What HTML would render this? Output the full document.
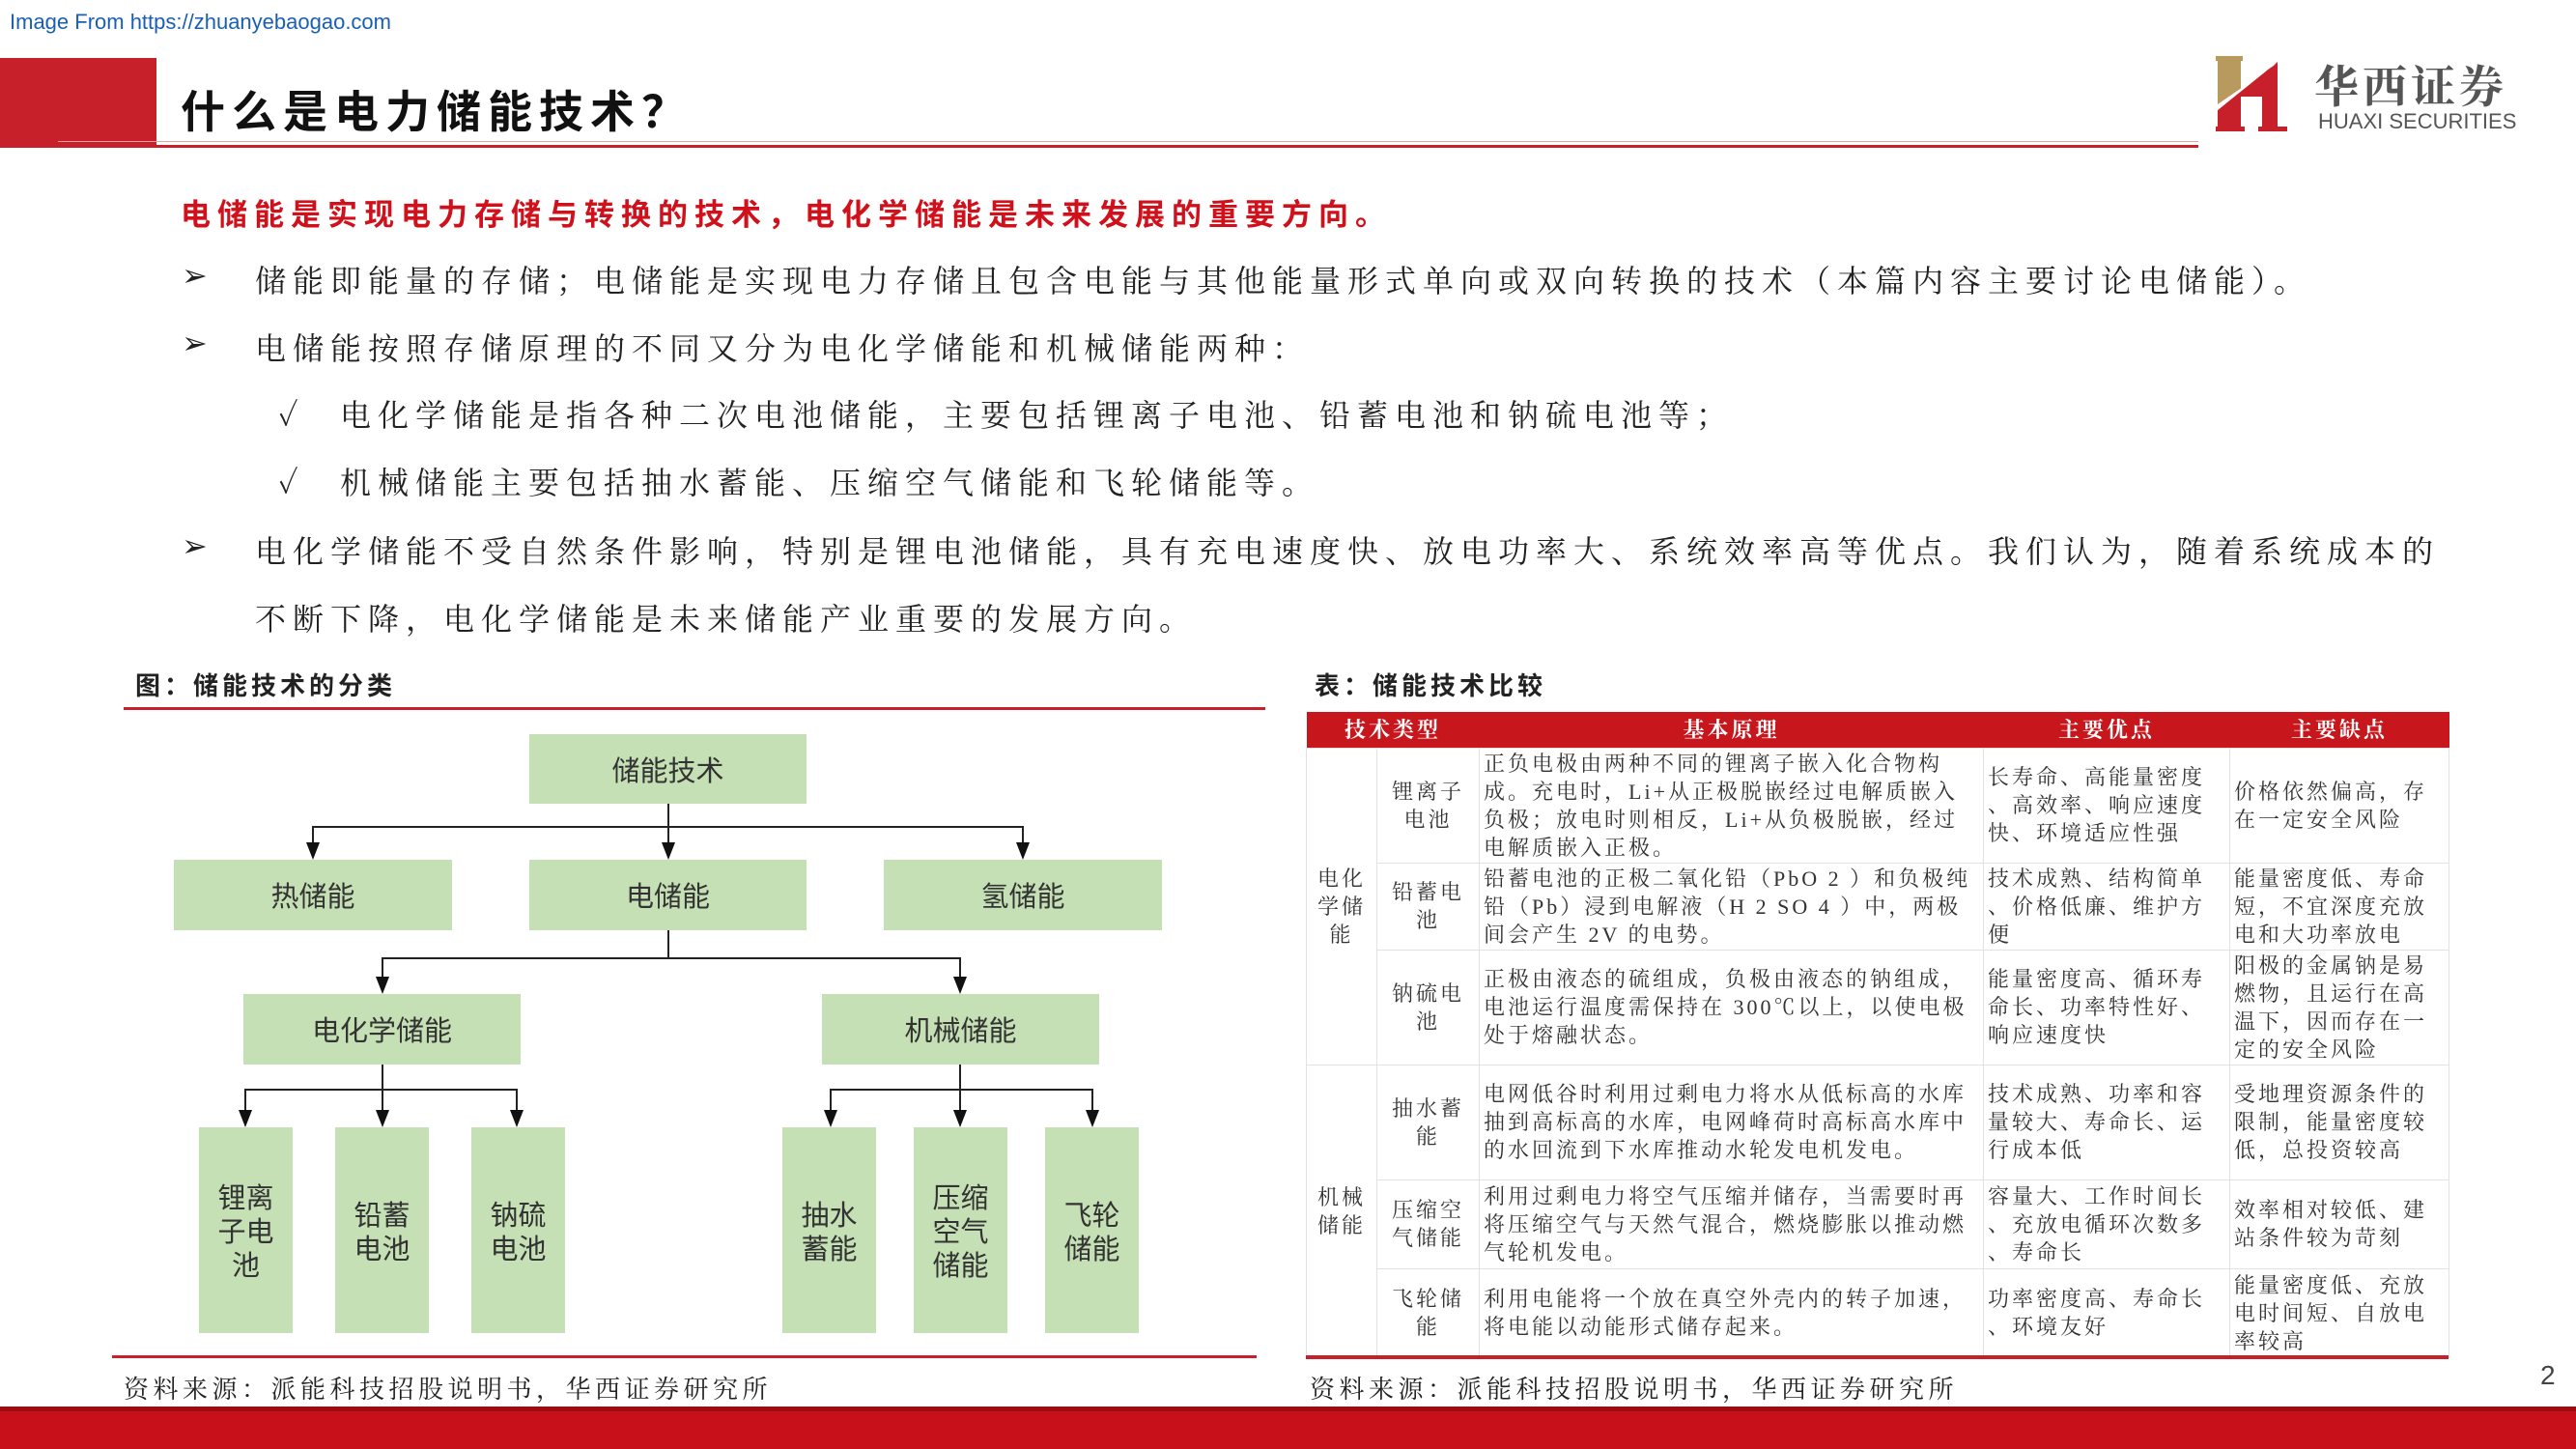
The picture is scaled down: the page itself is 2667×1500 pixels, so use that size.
<!DOCTYPE html>
<html><head><meta charset="utf-8"><style>
*{margin:0;padding:0;box-sizing:border-box}
body{width:2667px;height:1500px;position:relative;background:#fff;overflow:hidden;font-family:"Liberation Sans","Noto Serif CJK SC",serif;color:#222}
.a{position:absolute;white-space:nowrap}
.b{font-family:"Liberation Sans","Noto Sans CJK SC",sans-serif}
.s{font-family:"Liberation Serif","Noto Serif CJK SC",serif}
.box{position:absolute;background:#c5e0b4;display:flex;align-items:center;justify-content:center;text-align:center;font-family:"Noto Sans CJK SC",sans-serif;font-size:29px;color:#333;line-height:35px}
.ln{position:absolute;background:#222}
.ar{position:absolute;width:0;height:0;border-left:7px solid transparent;border-right:7px solid transparent;border-top:18px solid #111}
table{position:absolute;left:1352px;top:737px;width:1183px;border-collapse:collapse;table-layout:fixed;font-family:"Liberation Serif","Noto Serif CJK SC",serif;font-size:22px;letter-spacing:3px;line-height:29px;color:#333}
td{border:1px solid #e2e2e2;padding:0 4px;vertical-align:middle;overflow:hidden}
th{background:#c8161d;color:#fff;font-weight:bold;height:37px;font-size:22px;border:none}
.c{text-align:center}
</style></head><body>
<div class="a" style="left:10px;top:10px;font-size:22px;color:#1a5fb4;font-family:'Liberation Sans',sans-serif">Image From https://zhuanyebaogao.com</div>
<div class="a" style="left:0;top:60px;width:162px;height:93px;background:#c8202a"></div>
<div class="a" style="left:60px;top:150px;width:2216px;height:3px;background:#c8202a"></div>
<div class="a" style="left:60px;top:146px;width:2216px;height:1px;background:#e8a0a0"></div>
<div class="a b" style="left:187px;top:80px;font-size:46px;font-weight:bold;letter-spacing:7px;color:#111">什么是电力储能技术？</div>
<svg class="a" style="left:2294px;top:56px" width="76" height="82" viewBox="0 0 76 82">
<rect x="2" y="4" width="24" height="48" fill="#b89a5e"/><rect x="0" y="2" width="28" height="5" fill="#b89a5e"/>
<polygon points="2,58 64,8 64,78 48,78 48,44 26,44 26,78 2,78" fill="#c8202a"/>
<polygon points="2,52 60,12 64,8 2,58" fill="#fff"/>
<rect x="0" y="75" width="30" height="5" fill="#c8202a"/><rect x="44" y="75" width="30" height="5" fill="#c8202a"/>
</svg>
<div class="a s" style="left:2396px;top:54px;font-size:46px;font-weight:bold;color:#555;letter-spacing:4px">华西证券</div>
<div class="a" style="left:2400px;top:113px;font-size:22px;color:#555;font-family:'Liberation Sans',sans-serif">HUAXI SECURITIES</div>

<div class="a b" style="left:187px;top:197px;font-size:31px;font-weight:bold;color:#d0101b;letter-spacing:7px">电储能是实现电力存储与转换的技术，电化学储能是未来发展的重要方向。</div>
<div style="position:absolute;left:0;top:0;font-size:32px;letter-spacing:7px;color:#222">
<div class="a" style="left:188px;top:266px">➢</div><div class="a" style="left:264px;top:266px">储能即能量的存储；电储能是实现电力存储且包含电能与其他能量形式单向或双向转换的技术（本篇内容主要讨论电储能）。</div>
<div class="a" style="left:188px;top:336px">➢</div><div class="a" style="left:264px;top:336px">电储能按照存储原理的不同又分为电化学储能和机械储能两种：</div>
<div class="a" style="left:288px;top:405px">✓</div><div class="a" style="left:352px;top:405px">电化学储能是指各种二次电池储能，主要包括锂离子电池、铅蓄电池和钠硫电池等；</div>
<div class="a" style="left:288px;top:475px">✓</div><div class="a" style="left:352px;top:475px">机械储能主要包括抽水蓄能、压缩空气储能和飞轮储能等。</div>
<div class="a" style="left:188px;top:546px">➢</div><div class="a" style="left:264px;top:546px">电化学储能不受自然条件影响，特别是锂电池储能，具有充电速度快、放电功率大、系统效率高等优点。我们认为，随着系统成本的</div>
<div class="a" style="left:264px;top:616px">不断下降，电化学储能是未来储能产业重要的发展方向。</div>
</div>

<div class="a b" style="left:140px;top:690px;font-size:26px;font-weight:bold;letter-spacing:4px">图：储能技术的分类</div>
<div class="a" style="left:128px;top:732px;width:1182px;height:3px;background:#c8202a"></div>
<div class="a b" style="left:1361px;top:690px;font-size:26px;font-weight:bold;letter-spacing:4px">表：储能技术比较</div>

<div class="box" style="left:548px;top:760px;width:287px;height:72px">储能技术</div>
<div class="box" style="left:180px;top:890px;width:288px;height:73px">热储能</div>
<div class="box" style="left:548px;top:890px;width:287px;height:73px">电储能</div>
<div class="box" style="left:915px;top:890px;width:288px;height:73px">氢储能</div>
<div class="box" style="left:252px;top:1029px;width:287px;height:73px">电化学储能</div>
<div class="box" style="left:851px;top:1029px;width:287px;height:73px">机械储能</div>
<div class="box" style="left:206px;top:1167px;width:97px;height:213px">锂离<br>子电<br>池</div>
<div class="box" style="left:347px;top:1167px;width:97px;height:213px">铅蓄<br>电池</div>
<div class="box" style="left:488px;top:1167px;width:97px;height:213px">钠硫<br>电池</div>
<div class="box" style="left:810px;top:1167px;width:97px;height:213px">抽水<br>蓄能</div>
<div class="box" style="left:946px;top:1167px;width:97px;height:213px">压缩<br>空气<br>储能</div>
<div class="box" style="left:1082px;top:1167px;width:97px;height:213px">飞轮<br>储能</div>
<div class="ln" style="left:691px;top:832px;width:2px;height:42px"></div>
<div class="ln" style="left:323px;top:855px;width:737px;height:2px"></div>
<div class="ln" style="left:323px;top:855px;width:2px;height:20px"></div>
<div class="ln" style="left:1058px;top:855px;width:2px;height:20px"></div>
<div class="ar" style="left:317px;top:872px"></div><div class="ar" style="left:685px;top:872px"></div><div class="ar" style="left:1052px;top:872px"></div>
<div class="ln" style="left:691px;top:963px;width:2px;height:30px"></div>
<div class="ln" style="left:395px;top:991px;width:600px;height:2px"></div>
<div class="ln" style="left:395px;top:991px;width:2px;height:22px"></div>
<div class="ln" style="left:993px;top:991px;width:2px;height:22px"></div>
<div class="ar" style="left:389px;top:1011px"></div><div class="ar" style="left:987px;top:1011px"></div>
<div class="ln" style="left:395px;top:1102px;width:2px;height:26px"></div>
<div class="ln" style="left:253px;top:1127px;width:283px;height:2px"></div>
<div class="ln" style="left:253px;top:1127px;width:2px;height:24px"></div>
<div class="ln" style="left:395px;top:1127px;width:2px;height:24px"></div>
<div class="ln" style="left:534px;top:1127px;width:2px;height:24px"></div>
<div class="ar" style="left:247px;top:1149px"></div><div class="ar" style="left:389px;top:1149px"></div><div class="ar" style="left:528px;top:1149px"></div>
<div class="ln" style="left:993px;top:1102px;width:2px;height:26px"></div>
<div class="ln" style="left:859px;top:1127px;width:273px;height:2px"></div>
<div class="ln" style="left:859px;top:1127px;width:2px;height:24px"></div>
<div class="ln" style="left:993px;top:1127px;width:2px;height:24px"></div>
<div class="ln" style="left:1130px;top:1127px;width:2px;height:24px"></div>
<div class="ar" style="left:853px;top:1149px"></div><div class="ar" style="left:987px;top:1149px"></div><div class="ar" style="left:1124px;top:1149px"></div>

<div class="a" style="left:116px;top:1403px;width:1185px;height:3px;background:#c8202a"></div>

<table>
<colgroup><col style="width:73px"><col style="width:106px"><col style="width:522px"><col style="width:255px"><col style="width:227px"></colgroup>
<tr><th colspan="2">技术类型</th><th>基本原理</th><th>主要优点</th><th>主要缺点</th></tr>
<tr style="height:119px"><td rowspan="3" class="c">电化<br>学储<br>能</td><td class="c">锂离子<br>电池</td><td>正负电极由两种不同的锂离子嵌入化合物构成。充电时，Li+从正极脱嵌经过电解质嵌入负极；放电时则相反，Li+从负极脱嵌，经过电解质嵌入正极。</td><td>长寿命、高能量密度<br>、高效率、响应速度<br>快、环境适应性强</td><td>价格依然偏高，存<br>在一定安全风险</td></tr>
<tr style="height:90px"><td class="c">铅蓄电<br>池</td><td>铅蓄电池的正极二氧化铅（PbO 2 ）和负极纯铅（Pb）浸到电解液（H 2 SO 4 ）中，两极间会产生 2V 的电势。</td><td>技术成熟、结构简单<br>、价格低廉、维护方<br>便</td><td>能量密度低、寿命<br>短，不宜深度充放<br>电和大功率放电</td></tr>
<tr style="height:119px"><td class="c">钠硫电<br>池</td><td>正极由液态的硫组成，负极由液态的钠组成，电池运行温度需保持在 300℃以上，以使电极处于熔融状态。</td><td>能量密度高、循环寿<br>命长、功率特性好、<br>响应速度快</td><td>阳极的金属钠是易<br>燃物，且运行在高<br>温下，因而存在一<br>定的安全风险</td></tr>
<tr style="height:119px"><td rowspan="3" class="c">机械<br>储能</td><td class="c">抽水蓄<br>能</td><td>电网低谷时利用过剩电力将水从低标高的水库抽到高标高的水库，电网峰荷时高标高水库中的水回流到下水库推动水轮发电机发电。</td><td>技术成熟、功率和容<br>量较大、寿命长、运<br>行成本低</td><td>受地理资源条件的<br>限制，能量密度较<br>低，总投资较高</td></tr>
<tr style="height:92px"><td class="c">压缩空<br>气储能</td><td>利用过剩电力将空气压缩并储存，当需要时再将压缩空气与天然气混合，燃烧膨胀以推动燃气轮机发电。</td><td>容量大、工作时间长<br>、充放电循环次数多<br>、寿命长</td><td>效率相对较低、建<br>站条件较为苛刻</td></tr>
<tr style="height:92px"><td class="c">飞轮储<br>能</td><td>利用电能将一个放在真空外壳内的转子加速，将电能以动能形式储存起来。</td><td>功率密度高、寿命长<br>、环境友好</td><td>能量密度低、充放<br>电时间短、自放电<br>率较高</td></tr>
</table>
<div class="a" style="left:1352px;top:1403px;width:1183px;height:4px;background:#c8202a"></div>

<div class="a" style="left:128px;top:1418px;font-size:26px;letter-spacing:4.5px">资料来源：派能科技招股说明书，华西证券研究所</div>
<div class="a" style="left:1356px;top:1418px;font-size:26px;letter-spacing:4.5px">资料来源：派能科技招股说明书，华西证券研究所</div>
<div class="a" style="left:2630px;top:1408px;font-size:28px;color:#444;font-family:'Liberation Sans',sans-serif">2</div>
<div class="a" style="left:0;top:1456px;width:2667px;height:5px;background:#9a0d12"></div>
<div class="a" style="left:0;top:1461px;width:2667px;height:39px;background:#c8101a"></div>
</body></html>
